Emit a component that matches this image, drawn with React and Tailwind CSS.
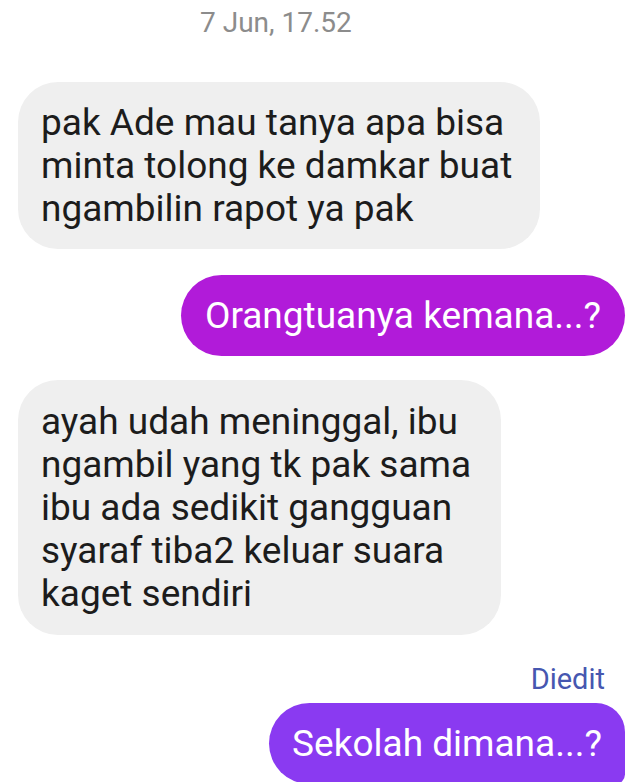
export default function App() {
  return (
    <div
      className="w-[640px] h-[782px] overflow-hidden bg-white flex flex-col"
      style={{ fontFamily: 'Roboto, "Noto Sans", sans-serif' }}
    >
      <div className="pt-[8px] pl-[200px] text-[28px] leading-[30px] text-[#8c8c8c]">
        7 Jun, 17.52
      </div>

      <div className="mt-[44px] ml-[18px] w-[522px] rounded-[40px] bg-[#efefef] pl-[23px] py-[19px] text-[37px] leading-[43px] text-[#1c1c1c]">
        <div className="whitespace-nowrap">pak Ade mau tanya apa bisa</div>
        <div className="whitespace-nowrap">minta tolong ke damkar buat</div>
        <div className="whitespace-nowrap">ngambilin rapot ya pak</div>
      </div>

      <div className="mt-[26px] self-end mr-[15px] w-[444px] rounded-full bg-[#b11bd9] py-[19px] text-center text-[37px] leading-[43px] text-white whitespace-nowrap">
        Orangtuanya kemana...?
      </div>

      <div className="mt-[24px] ml-[18px] w-[483px] rounded-[40px] bg-[#efefef] pl-[23px] py-[20px] text-[37px] leading-[43px] text-[#1c1c1c]">
        <div className="whitespace-nowrap">ayah udah meninggal, ibu</div>
        <div className="whitespace-nowrap">ngambil yang tk pak sama</div>
        <div className="whitespace-nowrap">ibu ada sedikit gangguan</div>
        <div className="whitespace-nowrap">syaraf tiba2 keluar suara</div>
        <div className="whitespace-nowrap">kaget sendiri</div>
      </div>

      <div className="mt-[29px] self-end mr-[35px] text-[29px] leading-[30px] text-[#4657b0]">
        Diedit
      </div>

      <div className="mt-[9px] self-end mr-[15px] w-[356px] shrink-0 rounded-l-[42px] rounded-tr-[30px] rounded-br-[10px] bg-[#8a3af1] py-[19px] text-center text-[37px] leading-[43px] text-white whitespace-nowrap">
        Sekolah dimana...?
      </div>
    </div>
  );
}
